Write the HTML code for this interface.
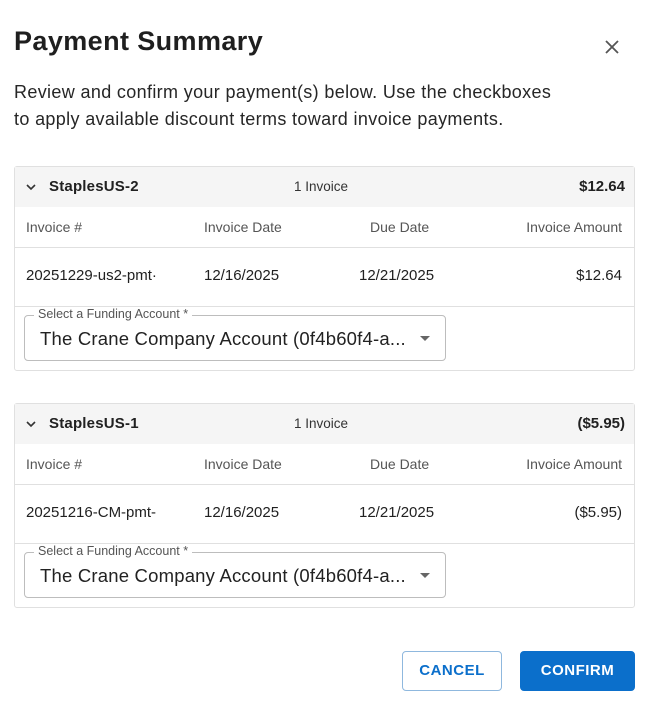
<!DOCTYPE html>
<html><head><style>
*{box-sizing:border-box;margin:0;padding:0}
body{width:649px;height:713px;background:#fff;font-family:"Liberation Sans",sans-serif;color:#212121;position:relative;overflow:hidden}
.abs{position:absolute}
h1{position:absolute;left:14px;top:26px;font-size:27px;font-weight:bold;color:#1f1f1f;letter-spacing:.4px}
.desc{position:absolute;left:14px;top:79px;font-size:18px;line-height:27px;color:#262626;letter-spacing:.35px}
.card{position:absolute;left:14px;width:621px;height:205px;border:1px solid #e0e0e0;border-radius:3px}
.hd{position:absolute;left:0;top:0;width:619px;height:40px;background:#f5f5f5}
.hd .n{position:absolute;left:34px;top:11px;font-size:15px;font-weight:bold;letter-spacing:.2px}
.hd .c{position:absolute;left:279px;top:12px;font-size:13.5px;color:#333}
.hd .t{position:absolute;right:9px;top:11px;font-size:15px;font-weight:bold}
.chev{position:absolute;left:10px;top:14px}
.row{position:absolute;left:0;width:619px;border-bottom:1px solid #e0e0e0;font-size:14px}
.row span{position:absolute}
.sel{position:absolute;left:9px;top:148px;width:422px;height:46px;border:1px solid #bdbdbd;border-radius:4px}
.lbl{position:absolute;left:9px;top:-9px;background:#fff;padding:0 4px;font-size:12.5px;color:#555}
.val{position:absolute;left:15px;top:12px;font-size:18.5px;color:#222;letter-spacing:.2px}
.arr{position:absolute;right:15px;top:20px;width:0;height:0;border-left:5px solid transparent;border-right:5px solid transparent;border-top:5px solid #666}
.btn{position:absolute;top:651px;height:40px;border-radius:4px;font-size:15px;font-weight:bold;letter-spacing:.5px;text-align:center;line-height:38px}
</style></head><body>
<h1>Payment Summary</h1>
<svg class="abs" style="left:604px;top:39px" width="16" height="16" viewBox="0 0 16 16"><path d="M2 2L14 14M14 2L2 14" stroke="#555" stroke-width="1.8"/></svg>
<div class="desc">Review and confirm your payment(s) below. Use the checkboxes<br>to apply available discount terms toward invoice payments.</div>

<div class="card" style="top:166px">
<div class="hd"><svg class="chev" width="12" height="12" viewBox="0 0 12 12"><path d="M2 4L6 8L10 4" fill="none" stroke="#333" stroke-width="1.6"/></svg><span class="n">StaplesUS-2</span><span class="c">1 Invoice</span><span class="t">$12.64</span></div>
<div class="row" style="top:40px;height:41px;color:#555"><span style="left:11px;top:12px">Invoice #</span><span style="left:189px;top:12px">Invoice Date</span><span style="left:355px;top:12px">Due Date</span><span style="right:12px;top:12px">Invoice Amount</span></div>
<div class="row" style="top:81px;height:59px;font-size:15px"><span style="left:11px;top:19px">20251229-us2-pmt·</span><span style="left:189px;top:19px">12/16/2025</span><span style="left:344px;top:19px">12/21/2025</span><span style="right:12px;top:19px">$12.64</span></div>
<div class="sel"><span class="lbl">Select a Funding Account *</span><span class="val">The Crane Company Account (0f4b60f4-a...</span><span class="arr"></span></div>
</div>

<div class="card" style="top:403px">
<div class="hd"><svg class="chev" width="12" height="12" viewBox="0 0 12 12"><path d="M2 4L6 8L10 4" fill="none" stroke="#333" stroke-width="1.6"/></svg><span class="n">StaplesUS-1</span><span class="c">1 Invoice</span><span class="t">($5.95)</span></div>
<div class="row" style="top:40px;height:41px;color:#555"><span style="left:11px;top:12px">Invoice #</span><span style="left:189px;top:12px">Invoice Date</span><span style="left:355px;top:12px">Due Date</span><span style="right:12px;top:12px">Invoice Amount</span></div>
<div class="row" style="top:81px;height:59px;font-size:15px"><span style="left:11px;top:19px">20251216-CM-pmt-</span><span style="left:189px;top:19px">12/16/2025</span><span style="left:344px;top:19px">12/21/2025</span><span style="right:12px;top:19px">($5.95)</span></div>
<div class="sel"><span class="lbl">Select a Funding Account *</span><span class="val">The Crane Company Account (0f4b60f4-a...</span><span class="arr"></span></div>
</div>

<div class="btn" style="left:402px;width:100px;border:1px solid #8fb8de;color:#0b6fcb">CANCEL</div>
<div class="btn" style="left:520px;width:115px;background:#0b6fcb;color:#fff;border:1px solid #0b6fcb">CONFIRM</div>
</body></html>
